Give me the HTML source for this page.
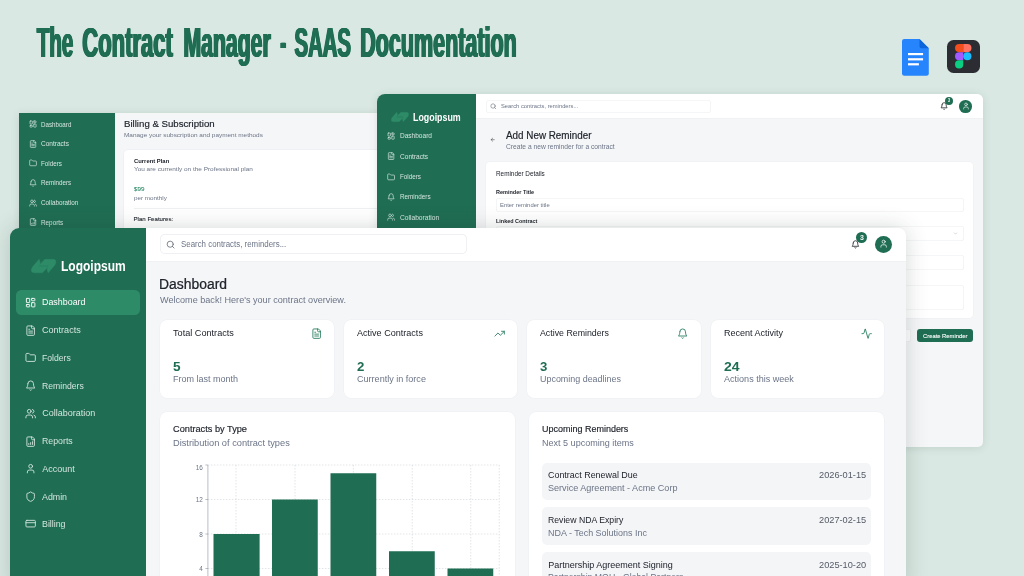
<!DOCTYPE html><html><head><meta charset="utf-8"><title>The Contract Manager - SAAS Documentation</title><style>html,body{margin:0;padding:0}body{width:1024px;height:576px;overflow:hidden;position:relative;background:#d9e8e2;font-family:"Liberation Sans", sans-serif}#root{position:absolute;left:0;top:0;width:1024px;height:576px;overflow:hidden;will-change:transform}svg{display:block;overflow:visible}.t{position:absolute;white-space:nowrap;transform-origin:0 0}h1{position:absolute;left:0;top:17px;margin:0;white-space:nowrap;font-size:43.2px;line-height:50px;font-weight:700;color:#1f6d53}.tt{display:inline-block;transform-origin:0 0;text-shadow:1.4px 0 0 #1f6d53,-1.4px 0 0 #1f6d53,.7px 0 0 #1f6d53,-.7px 0 0 #1f6d53}</style></head><body><div id="root"><h1><span class="tt" style="transform:translateX(36.82px) scaleX(0.4745)">The</span> <span class="tt" style="transform:translateX(-6.67px) scaleX(0.5094)">Contract</span> <span class="tt" style="transform:translateX(-94.51px) scaleX(0.4912)">Manager</span> <span class="tt" style="transform:translateX(-187.63px) scaleX(0.4000)">-</span> <span class="tt" style="transform:translateX(-199.49px) scaleX(0.4709)">SAAS</span> <span class="tt" style="transform:translateX(-265.82px) scaleX(0.4983)">Documentation</span></h1>
<svg style="position:absolute;left:901.700px;top:38.700px" width="26.800" height="36.700" viewBox="0 0 26.800 36.700"><path d="M2.500 0 H17.500 L26.800 9.300 V34.200 Q26.800 36.700 24.300 36.700 H2.500 Q0 36.700 0 34.200 V2.500 Q0 0 2.500 0 Z" fill="#2684fc"/><path d="M17.500 0 L26.800 9.300 H19.500 Q17.500 9.300 17.500 7.300 Z" fill="#0a66da"/><rect x="6" y="14" width="15.100" height="2.200" fill="#fff"/><rect x="6" y="19.200" width="15.100" height="2.200" fill="#fff"/><rect x="6" y="24.200" width="10.900" height="2.200" fill="#fff"/></svg><div style="position:absolute;left:946.8px;top:40px;width:32.90px;height:32.90px;background:#2c2d33;border-radius:6.5px;"></div><svg style="position:absolute;left:954.900px;top:44.400px" width="16.500" height="24.500" viewBox="0 0 16.500 24.500"><path d="M4.100 0 H8.250 V8.150 H4.100 A4.075 4.075 0 0 1 4.100 0 Z" fill="#f24e1e"/><path d="M8.250 0 H12.400 A4.075 4.075 0 0 1 12.400 8.150 H8.250 Z" fill="#ff7262"/><path d="M4.100 8.150 H8.250 V16.300 H4.100 A4.075 4.075 0 0 1 4.100 8.150 Z" fill="#a259ff"/><circle cx="12.350" cy="12.225" r="4.075" fill="#1abcfe"/><path d="M4.100 16.300 H8.250 V20.400 A4.100 4.100 0 1 1 4.100 16.300 Z" fill="#0acf83"/></svg><div style="position:absolute;left:18.6px;top:112.6px;width:361.40px;height:119.40px;border-radius:0;overflow:hidden;background:#f5f6f8;box-shadow:0 1px 8px rgba(40,70,60,.13)"><div style="position:absolute;left:-18.6px;top:-112.6px;width:1024px;height:576px"><div style="position:absolute;left:18.6px;top:112.6px;width:96.40px;height:127.40px;background:#1f6d53;border-radius:0px;"></div><svg style="position:absolute;left:28.95px;top:120.25px;" width="8.1" height="8.1" viewBox="0 0 24 24" fill="none" stroke="#d4e6de" stroke-width="2" stroke-linecap="round" stroke-linejoin="round"><rect x="3" y="3" width="7" height="9" rx="1"/><rect x="14" y="3" width="7" height="5" rx="1"/><rect x="14" y="12" width="7" height="9" rx="1"/><rect x="3" y="16" width="7" height="5" rx="1"/></svg><span class="t" style="top:120px;font-size:6.4px;line-height:9px;color:#d4e6de;left:41.25px;transform:scaleX(0.970);">Dashboard</span>
<svg style="position:absolute;left:28.95px;top:139.75px;" width="8.1" height="8.1" viewBox="0 0 24 24" fill="none" stroke="#d4e6de" stroke-width="2" stroke-linecap="round" stroke-linejoin="round"><path d="M15 2H6a2 2 0 0 0-2 2v16a2 2 0 0 0 2 2h12a2 2 0 0 0 2-2V7Z"/><path d="M14 2v4a2 2 0 0 0 2 2h4"/><path d="M10 9H8"/><path d="M16 13H8"/><path d="M16 17H8"/></svg><span class="t" style="top:139px;font-size:6.4px;line-height:9px;color:#d4e6de;left:41.25px;transform:scaleX(1.022);">Contracts</span>
<svg style="position:absolute;left:28.95px;top:159.25px;" width="8.1" height="8.1" viewBox="0 0 24 24" fill="none" stroke="#d4e6de" stroke-width="2" stroke-linecap="round" stroke-linejoin="round"><path d="M20 20a2 2 0 0 0 2-2V8a2 2 0 0 0-2-2h-7.9a2 2 0 0 1-1.69-.9L9.6 3.9A2 2 0 0 0 7.93 3H4a2 2 0 0 0-2 2v13a2 2 0 0 0 2 2Z"/></svg><span class="t" style="top:159px;font-size:6.4px;line-height:9px;color:#d4e6de;left:41.25px;transform:scaleX(0.983);">Folders</span>
<svg style="position:absolute;left:28.95px;top:178.75px;" width="8.1" height="8.1" viewBox="0 0 24 24" fill="none" stroke="#d4e6de" stroke-width="2" stroke-linecap="round" stroke-linejoin="round"><path d="M6 8a6 6 0 0 1 12 0c0 7 3 9 3 9H3s3-2 3-9"/><path d="M10.3 21a1.94 1.94 0 0 0 3.4 0"/></svg><span class="t" style="top:178px;font-size:6.4px;line-height:9px;color:#d4e6de;left:41.25px;transform:scaleX(0.977);">Reminders</span>
<svg style="position:absolute;left:28.95px;top:198.5px;" width="8.1" height="8.1" viewBox="0 0 24 24" fill="none" stroke="#d4e6de" stroke-width="2" stroke-linecap="round" stroke-linejoin="round"><path d="M16 21v-2a4 4 0 0 0-4-4H6a4 4 0 0 0-4 4v2"/><circle cx="9" cy="7" r="4"/><path d="M22 21v-2a4 4 0 0 0-3-3.87"/><path d="M16 3.13a4 4 0 0 1 0 7.75"/></svg><span class="t" style="top:198px;font-size:6.4px;line-height:9px;color:#d4e6de;left:41.25px;transform:scaleX(0.991);">Collaboration</span>
<svg style="position:absolute;left:28.95px;top:218.0px;" width="8.1" height="8.1" viewBox="0 0 24 24" fill="none" stroke="#d4e6de" stroke-width="2" stroke-linecap="round" stroke-linejoin="round"><path d="M15 2H6a2 2 0 0 0-2 2v16a2 2 0 0 0 2 2h12a2 2 0 0 0 2-2V7Z"/><path d="M14 2v4a2 2 0 0 0 2 2h4"/><path d="M8 18v-2"/><path d="M12 18v-4"/><path d="M16 18v-6"/></svg><span class="t" style="top:218px;font-size:6.4px;line-height:9px;color:#d4e6de;left:41.25px;transform:scaleX(0.992);">Reports</span>
<span class="t" style="top:118px;font-size:9.6px;line-height:12px;color:#20242c;-webkit-text-stroke:0.16px #20242c;left:124.20px;transform:scaleX(1.006);">Billing &amp; Subscription</span>
<span class="t" style="top:130px;font-size:6.1px;line-height:9px;color:#6b7486;left:124.20px;transform:scaleX(1.054);">Manage your subscription and payment methods</span>
<div style="position:absolute;left:124.2px;top:149.6px;width:275.80px;height:90.40px;background:#fff;border-radius:4px;box-shadow:0 0 0 .5px #e8eaed"></div><span class="t" style="top:156px;font-size:6.1px;line-height:9px;color:#20242c;font-weight:700;left:133.50px;transform:scaleX(0.963);">Current Plan</span>
<span class="t" style="top:164px;font-size:6.1px;line-height:9px;color:#6b7486;left:133.50px;transform:scaleX(1.053);">You are currently on the Professional plan</span>
<span class="t" style="top:184px;font-size:6.1px;line-height:9px;color:#2e8b68;-webkit-text-stroke:0.10px #2e8b68;left:133.50px;transform:scaleX(1.021);">$99</span>
<span class="t" style="top:193px;font-size:6.1px;line-height:9px;color:#6b7486;left:133.50px;transform:scaleX(1.031);">per monthly</span>
<div style="position:absolute;left:133.5px;top:208.4px;width:266.50px;height:0.50px;background:#eef0f2;border-radius:0px;"></div><span class="t" style="top:214px;font-size:6.1px;line-height:9px;color:#20242c;-webkit-text-stroke:0.10px #20242c;left:133.50px;">Plan Features:</span>
</div></div><div style="position:absolute;left:376.6px;top:93.5px;width:606.20px;height:353.80px;border-radius:8px 6px 5px 5px;overflow:hidden;background:#f5f6f8;box-shadow:0 1px 8px rgba(40,70,60,.13)"><div style="position:absolute;left:-376.6px;top:-93.5px;width:1024px;height:576px"><div style="position:absolute;left:470px;top:93.5px;width:513.00px;height:24.70px;background:#fff;border-radius:0px;"></div><div style="position:absolute;left:470px;top:118.2px;width:513.00px;height:0.50px;background:#f0f1f3;border-radius:0px;"></div><div style="position:absolute;left:376.6px;top:93.5px;width:99.50px;height:354.50px;background:#1f6d53;border-radius:0px;"></div><svg style="position:absolute;left:391.25px;top:112px" width="18.00" height="10.00" viewBox="0 0 25.300 14.800" preserveAspectRatio="none" fill="#2e8b68" stroke="#2e8b68" stroke-width=".5" stroke-linejoin="round"><path d="M8.140 0.300 L9.250 4.140 L8 7.700 H17.500 L11.440 14.500 H3.300 Q0.300 14.500 0.400 11.600 Q0.500 10.200 1.500 8.300 Z"/><path d="M8.140 0.300 L9.250 4.140 L8 7.700 H17.500 L11.440 14.500 H3.300 Q0.300 14.500 0.400 11.600 Q0.500 10.200 1.500 8.300 Z" transform="rotate(180 12.650 7.400)"/></svg><span class="t" style="top:111px;font-size:10.1px;line-height:13px;color:#fff;font-weight:700;left:413.00px;transform:scaleX(0.878);">Logoipsum</span>
<svg style="position:absolute;left:386.9px;top:132.0px;" width="8.2" height="8.2" viewBox="0 0 24 24" fill="none" stroke="#d4e6de" stroke-width="2" stroke-linecap="round" stroke-linejoin="round"><rect x="3" y="3" width="7" height="9" rx="1"/><rect x="14" y="3" width="7" height="5" rx="1"/><rect x="14" y="12" width="7" height="9" rx="1"/><rect x="3" y="16" width="7" height="5" rx="1"/></svg><span class="t" style="top:131px;font-size:6.6px;line-height:9px;color:#d4e6de;left:399.50px;transform:scaleX(0.990);">Dashboard</span>
<svg style="position:absolute;left:386.9px;top:152.25px;" width="8.2" height="8.2" viewBox="0 0 24 24" fill="none" stroke="#d4e6de" stroke-width="2" stroke-linecap="round" stroke-linejoin="round"><path d="M15 2H6a2 2 0 0 0-2 2v16a2 2 0 0 0 2 2h12a2 2 0 0 0 2-2V7Z"/><path d="M14 2v4a2 2 0 0 0 2 2h4"/><path d="M10 9H8"/><path d="M16 13H8"/><path d="M16 17H8"/></svg><span class="t" style="top:152px;font-size:6.6px;line-height:9px;color:#d4e6de;left:399.50px;transform:scaleX(0.994);">Contracts</span>
<svg style="position:absolute;left:386.9px;top:172.5px;" width="8.2" height="8.2" viewBox="0 0 24 24" fill="none" stroke="#d4e6de" stroke-width="2" stroke-linecap="round" stroke-linejoin="round"><path d="M20 20a2 2 0 0 0 2-2V8a2 2 0 0 0-2-2h-7.9a2 2 0 0 1-1.69-.9L9.6 3.9A2 2 0 0 0 7.93 3H4a2 2 0 0 0-2 2v13a2 2 0 0 0 2 2Z"/></svg><span class="t" style="top:172px;font-size:6.6px;line-height:9px;color:#d4e6de;left:399.50px;transform:scaleX(0.948);">Folders</span>
<svg style="position:absolute;left:386.9px;top:192.75px;" width="8.2" height="8.2" viewBox="0 0 24 24" fill="none" stroke="#d4e6de" stroke-width="2" stroke-linecap="round" stroke-linejoin="round"><path d="M6 8a6 6 0 0 1 12 0c0 7 3 9 3 9H3s3-2 3-9"/><path d="M10.3 21a1.94 1.94 0 0 0 3.4 0"/></svg><span class="t" style="top:192px;font-size:6.6px;line-height:9px;color:#d4e6de;left:399.50px;transform:scaleX(0.959);">Reminders</span>
<svg style="position:absolute;left:386.9px;top:213.25px;" width="8.2" height="8.2" viewBox="0 0 24 24" fill="none" stroke="#d4e6de" stroke-width="2" stroke-linecap="round" stroke-linejoin="round"><path d="M16 21v-2a4 4 0 0 0-4-4H6a4 4 0 0 0-4 4v2"/><circle cx="9" cy="7" r="4"/><path d="M22 21v-2a4 4 0 0 0-3-3.87"/><path d="M16 3.13a4 4 0 0 1 0 7.75"/></svg><span class="t" style="top:213px;font-size:6.6px;line-height:9px;color:#d4e6de;left:399.50px;transform:scaleX(1.008);">Collaboration</span>
<div style="position:absolute;left:485.5px;top:99.5px;width:225.00px;height:13.50px;background:#fff;border-radius:3.5px;box-shadow:inset 0 0 0 .6px #eceef1"></div><svg style="position:absolute;left:489.8px;top:103.05px;" width="6.6" height="6.6" viewBox="0 0 24 24" fill="none" stroke="#5d6370" stroke-width="2" stroke-linecap="round" stroke-linejoin="round"><circle cx="11" cy="11" r="8"/><path d="m21 21-4.300-4.300"/></svg><span class="t" style="top:101px;font-size:6.1px;line-height:9px;color:#6b7486;left:501.00px;transform:scaleX(0.950);">Search contracts, reminders...</span>
<svg style="position:absolute;left:939.6px;top:101.8px;" width="8.2" height="8.2" viewBox="0 0 24 24" fill="none" stroke="#24272e" stroke-width="2.3" stroke-linecap="round" stroke-linejoin="round"><path d="M6 8a6 6 0 0 1 12 0c0 7 3 9 3 9H3s3-2 3-9"/><path d="M10.3 21a1.94 1.94 0 0 0 3.4 0"/></svg><div style="position:absolute;left:945px;top:96.500px;width:8px;height:8px;border-radius:50%;background:#1f6d53"></div><span class="t" style="top:97px;font-size:4.6px;line-height:7px;color:#fff;font-weight:700;left:947.90px;transform:scaleX(0.800);">3</span>
<div style="position:absolute;left:959.200px;top:100px;width:12.600px;height:12.600px;border-radius:50%;background:#1f6d53"></div><svg style="position:absolute;left:961.7px;top:102.3px;" width="8" height="8" viewBox="0 0 24 24" fill="none" stroke="#fff" stroke-width="1.9" stroke-linecap="round" stroke-linejoin="round"><path d="M19 21v-2a4 4 0 0 0-4-4H9a4 4 0 0 0-4 4v2"/><circle cx="12" cy="7" r="4"/></svg><svg style="position:absolute;left:489.8px;top:137.3px;" width="5.4" height="5.4" viewBox="0 0 24 24" fill="none" stroke="#30343c" stroke-width="2.2" stroke-linecap="round" stroke-linejoin="round"><path d="m12 19-7-7 7-7"/><path d="M19 12H5"/></svg><span class="t" style="top:129px;font-size:10.4px;line-height:13px;color:#20242c;-webkit-text-stroke:0.18px #20242c;left:506.00px;transform:scaleX(0.949);">Add New Reminder</span>
<span class="t" style="top:142px;font-size:6.3px;line-height:9px;color:#6b7486;left:506.00px;transform:scaleX(1.060);">Create a new reminder for a contract</span>
<div style="position:absolute;left:486px;top:161.5px;width:487.00px;height:156.50px;background:#fff;border-radius:4px;box-shadow:0 0 0 .5px #eceef1"></div><span class="t" style="top:169px;font-size:6.6px;line-height:9px;color:#20242c;left:495.50px;transform:scaleX(0.965);">Reminder Details</span>
<span class="t" style="top:188px;font-size:5.7px;line-height:8px;color:#20242c;font-weight:700;left:495.50px;transform:scaleX(0.968);">Reminder Title</span>
<div style="position:absolute;left:495.5px;top:198px;width:468.00px;height:13.50px;background:#fff;border-radius:3px;box-shadow:inset 0 0 0 .6px #eceef1"></div><span class="t" style="top:201px;font-size:5.7px;line-height:8px;color:#6b7486;left:500.00px;transform:scaleX(1.034);">Enter reminder title</span>
<span class="t" style="top:217px;font-size:5.7px;line-height:8px;color:#20242c;font-weight:700;left:495.50px;transform:scaleX(0.956);">Linked Contract</span>
<div style="position:absolute;left:495.5px;top:226px;width:468.00px;height:14.50px;background:#fff;border-radius:3px;box-shadow:inset 0 0 0 .6px #eceef1"></div><svg style="position:absolute;left:952.5px;top:230.8px;" width="5" height="5" viewBox="0 0 24 24" fill="none" stroke="#9aa0aa" stroke-width="2" stroke-linecap="round" stroke-linejoin="round"><path d="m6 9 6 6 6-6"/></svg><div style="position:absolute;left:495.5px;top:255px;width:468.00px;height:14.50px;background:#fff;border-radius:3px;box-shadow:inset 0 0 0 .6px #eceef1"></div><div style="position:absolute;left:495.5px;top:284.5px;width:468.00px;height:25.00px;background:#fff;border-radius:3px;box-shadow:inset 0 0 0 .6px #eceef1"></div><div style="position:absolute;left:880px;top:328.6px;width:31.30px;height:13.90px;background:#fff;border-radius:3px;box-shadow:inset 0 0 0 .6px #e6e8ec"></div><span class="t" style="top:332px;font-size:5.6px;line-height:8px;color:#20242c;font-weight:700;left:887.00px;transform:scaleX(0.905);">Cancel</span>
<div style="position:absolute;left:917.2px;top:328.6px;width:56.30px;height:13.90px;background:#1f6d53;border-radius:3px;"></div><span class="t" style="top:332px;font-size:5.7px;line-height:8px;color:#fff;-webkit-text-stroke:0.10px #fff;left:922.90px;transform:scaleX(1.025);">Create Reminder</span>
</div></div><div style="position:absolute;left:10.4px;top:227.5px;width:895.60px;height:362.50px;border-radius:9px 8px 0 0;overflow:hidden;background:#f5f6f8;box-shadow:0 0 22px rgba(40,60,50,.2)"><div style="position:absolute;left:-10.4px;top:-227.5px;width:1024px;height:576px"><div style="position:absolute;left:140px;top:227.5px;width:766.00px;height:33.30px;background:#fff;border-radius:0px;"></div><div style="position:absolute;left:140px;top:260.8px;width:766.00px;height:0.50px;background:#f0f1f3;border-radius:0px;"></div><div style="position:absolute;left:10.4px;top:227.5px;width:136.10px;height:352.50px;background:#1f6d53;border-radius:0px;"></div><svg style="position:absolute;left:30.75px;top:259.1px" width="25.25" height="14.10" viewBox="0 0 25.300 14.800" preserveAspectRatio="none" fill="#2e8b68" stroke="#2e8b68" stroke-width=".5" stroke-linejoin="round"><path d="M8.140 0.300 L9.250 4.140 L8 7.700 H17.500 L11.440 14.500 H3.300 Q0.300 14.500 0.400 11.600 Q0.500 10.200 1.500 8.300 Z"/><path d="M8.140 0.300 L9.250 4.140 L8 7.700 H17.500 L11.440 14.500 H3.300 Q0.300 14.500 0.400 11.600 Q0.500 10.200 1.500 8.300 Z" transform="rotate(180 12.650 7.400)"/></svg><span class="t" style="top:259px;font-size:13.8px;line-height:16px;color:#fff;font-weight:700;left:60.80px;transform:scaleX(0.871);">Logoipsum</span>
<div style="position:absolute;left:16.4px;top:289.5px;width:123.70px;height:25.50px;background:#2e8b68;border-radius:5.5px;"></div><svg style="position:absolute;left:24.85px;top:296.75px;" width="11.3" height="11.3" viewBox="0 0 24 24" fill="none" stroke="#fff" stroke-width="1.9" stroke-linecap="round" stroke-linejoin="round"><rect x="3" y="3" width="7" height="9" rx="1"/><rect x="14" y="3" width="7" height="5" rx="1"/><rect x="14" y="12" width="7" height="9" rx="1"/><rect x="3" y="16" width="7" height="5" rx="1"/></svg><span class="t" style="top:297px;font-size:9px;line-height:11px;color:#fff;left:42.30px;transform:scaleX(0.988);">Dashboard</span>
<svg style="position:absolute;left:24.85px;top:324.75px;" width="11.3" height="11.3" viewBox="0 0 24 24" fill="none" stroke="#d4e6de" stroke-width="1.9" stroke-linecap="round" stroke-linejoin="round"><path d="M15 2H6a2 2 0 0 0-2 2v16a2 2 0 0 0 2 2h12a2 2 0 0 0 2-2V7Z"/><path d="M14 2v4a2 2 0 0 0 2 2h4"/><path d="M10 9H8"/><path d="M16 13H8"/><path d="M16 17H8"/></svg><span class="t" style="top:325px;font-size:9px;line-height:11px;color:#d4e6de;left:42.30px;transform:scaleX(1.005);">Contracts</span>
<svg style="position:absolute;left:24.85px;top:352.25px;" width="11.3" height="11.3" viewBox="0 0 24 24" fill="none" stroke="#d4e6de" stroke-width="1.9" stroke-linecap="round" stroke-linejoin="round"><path d="M20 20a2 2 0 0 0 2-2V8a2 2 0 0 0-2-2h-7.9a2 2 0 0 1-1.69-.9L9.6 3.9A2 2 0 0 0 7.93 3H4a2 2 0 0 0-2 2v13a2 2 0 0 0 2 2Z"/></svg><span class="t" style="top:353px;font-size:9px;line-height:11px;color:#d4e6de;left:42.30px;transform:scaleX(0.957);">Folders</span>
<svg style="position:absolute;left:24.85px;top:379.95px;" width="11.3" height="11.3" viewBox="0 0 24 24" fill="none" stroke="#d4e6de" stroke-width="1.9" stroke-linecap="round" stroke-linejoin="round"><path d="M6 8a6 6 0 0 1 12 0c0 7 3 9 3 9H3s3-2 3-9"/><path d="M10.3 21a1.94 1.94 0 0 0 3.4 0"/></svg><span class="t" style="top:381px;font-size:9px;line-height:11px;color:#d4e6de;left:42.30px;transform:scaleX(0.961);">Reminders</span>
<svg style="position:absolute;left:24.85px;top:407.65px;" width="11.3" height="11.3" viewBox="0 0 24 24" fill="none" stroke="#d4e6de" stroke-width="1.9" stroke-linecap="round" stroke-linejoin="round"><path d="M16 21v-2a4 4 0 0 0-4-4H6a4 4 0 0 0-4 4v2"/><circle cx="9" cy="7" r="4"/><path d="M22 21v-2a4 4 0 0 0-3-3.87"/><path d="M16 3.13a4 4 0 0 1 0 7.75"/></svg><span class="t" style="top:408px;font-size:9px;line-height:11px;color:#d4e6de;left:42.30px;">Collaboration</span>
<svg style="position:absolute;left:24.85px;top:435.55px;" width="11.3" height="11.3" viewBox="0 0 24 24" fill="none" stroke="#d4e6de" stroke-width="1.9" stroke-linecap="round" stroke-linejoin="round"><path d="M15 2H6a2 2 0 0 0-2 2v16a2 2 0 0 0 2 2h12a2 2 0 0 0 2-2V7Z"/><path d="M14 2v4a2 2 0 0 0 2 2h4"/><path d="M8 18v-2"/><path d="M12 18v-4"/><path d="M16 18v-6"/></svg><span class="t" style="top:436px;font-size:9px;line-height:11px;color:#d4e6de;left:42.30px;transform:scaleX(0.975);">Reports</span>
<svg style="position:absolute;left:24.85px;top:463.25px;" width="11.3" height="11.3" viewBox="0 0 24 24" fill="none" stroke="#d4e6de" stroke-width="1.9" stroke-linecap="round" stroke-linejoin="round"><path d="M19 21v-2a4 4 0 0 0-4-4H9a4 4 0 0 0-4 4v2"/><circle cx="12" cy="7" r="4"/></svg><span class="t" style="top:464px;font-size:9px;line-height:11px;color:#d4e6de;left:42.30px;">Account</span>
<svg style="position:absolute;left:24.85px;top:490.95px;" width="11.3" height="11.3" viewBox="0 0 24 24" fill="none" stroke="#d4e6de" stroke-width="1.9" stroke-linecap="round" stroke-linejoin="round"><path d="M20 13c0 5-3.5 7.500-7.660 8.950a1 1 0 0 1-.67-.01C7.500 20.500 4 18 4 13V6a1 1 0 0 1 1-1c2 0 4.500-1.200 6.240-2.720a1.170 1.170 0 0 1 1.520 0C14.510 3.810 17 5 19 5a1 1 0 0 1 1 1z"/></svg><span class="t" style="top:492px;font-size:9px;line-height:11px;color:#d4e6de;left:42.30px;transform:scaleX(0.980);">Admin</span>
<svg style="position:absolute;left:24.85px;top:518.45px;" width="11.3" height="11.3" viewBox="0 0 24 24" fill="none" stroke="#d4e6de" stroke-width="1.9" stroke-linecap="round" stroke-linejoin="round"><rect width="20" height="14" x="2" y="5" rx="2"/><line x1="2" x2="22" y1="10" y2="10"/></svg><span class="t" style="top:519px;font-size:9px;line-height:11px;color:#d4e6de;left:42.30px;transform:scaleX(0.979);">Billing</span>
<div style="position:absolute;left:159.75px;top:234.3px;width:306.75px;height:19.30px;background:#fff;border-radius:5px;box-shadow:inset 0 0 0 .7px #eaecef"></div><svg style="position:absolute;left:165.8px;top:239.8px;" width="9.2" height="9.2" viewBox="0 0 24 24" fill="none" stroke="#5d6370" stroke-width="2" stroke-linecap="round" stroke-linejoin="round"><circle cx="11" cy="11" r="8"/><path d="m21 21-4.300-4.300"/></svg><span class="t" style="top:239px;font-size:8.3px;line-height:11px;color:#6b7486;left:181.00px;transform:scaleX(0.951);">Search contracts, reminders...</span>
<svg style="position:absolute;left:851.05px;top:239.55px;" width="8.9" height="8.9" viewBox="0 0 24 24" fill="none" stroke="#24272e" stroke-width="2.2" stroke-linecap="round" stroke-linejoin="round"><path d="M6 8a6 6 0 0 1 12 0c0 7 3 9 3 9H3s3-2 3-9"/><path d="M10.3 21a1.94 1.94 0 0 0 3.4 0"/></svg><div style="position:absolute;left:856.250px;top:232px;width:11px;height:11px;border-radius:50%;background:#1f6d53"></div><span class="t" style="top:233px;font-size:7px;line-height:9px;color:#eef6f2;font-weight:700;left:860.00px;">3</span>
<div style="position:absolute;left:874.750px;top:235.500px;width:17px;height:17px;border-radius:50%;background:#1f6d53"></div><svg style="position:absolute;left:878.65px;top:239.45px;" width="9.3" height="9.3" viewBox="0 0 24 24" fill="none" stroke="#fff" stroke-width="1.9" stroke-linecap="round" stroke-linejoin="round"><path d="M19 21v-2a4 4 0 0 0-4-4H9a4 4 0 0 0-4 4v2"/><circle cx="12" cy="7" r="4"/></svg><span class="t" style="top:276px;font-size:14px;line-height:16px;color:#20242c;-webkit-text-stroke:0.24px #20242c;left:158.76px;transform:scaleX(0.993);">Dashboard</span>
<span class="t" style="top:295px;font-size:9px;line-height:11px;color:#6b7486;left:159.75px;transform:scaleX(1.010);">Welcome back! Here's your contract overview.</span>
<div style="position:absolute;left:159.75px;top:319.6px;width:174.25px;height:78.40px;background:#fff;border-radius:7px;box-shadow:0 0 0 .5px #eceef1"></div><span class="t" style="top:328px;font-size:8.8px;line-height:11px;color:#20242c;left:172.75px;transform:scaleX(1.038);">Total Contracts</span>
<span class="t" style="top:360px;font-size:12.3px;line-height:15px;color:#1f6d53;font-weight:700;left:172.75px;transform:scaleX(1.107);">5</span>
<span class="t" style="top:374px;font-size:8.8px;line-height:11px;color:#6b7486;left:172.75px;transform:scaleX(1.025);">From last month</span>
<svg style="position:absolute;left:310.55px;top:327.65px;" width="11.3" height="11.3" viewBox="0 0 24 24" fill="none" stroke="#2a7f60" stroke-width="1.9" stroke-linecap="round" stroke-linejoin="round"><path d="M15 2H6a2 2 0 0 0-2 2v16a2 2 0 0 0 2 2h12a2 2 0 0 0 2-2V7Z"/><path d="M14 2v4a2 2 0 0 0 2 2h4"/><path d="M10 9H8"/><path d="M16 13H8"/><path d="M16 17H8"/></svg><div style="position:absolute;left:343.5px;top:319.6px;width:173.75px;height:78.40px;background:#fff;border-radius:7px;box-shadow:0 0 0 .5px #eceef1"></div><span class="t" style="top:328px;font-size:8.8px;line-height:11px;color:#20242c;left:356.50px;transform:scaleX(1.029);">Active Contracts</span>
<span class="t" style="top:360px;font-size:12.3px;line-height:15px;color:#1f6d53;font-weight:700;left:356.50px;transform:scaleX(1.071);">2</span>
<span class="t" style="top:374px;font-size:8.8px;line-height:11px;color:#6b7486;left:356.50px;transform:scaleX(1.029);">Currently in force</span>
<svg style="position:absolute;left:493.8px;top:327.65px;" width="11.3" height="11.3" viewBox="0 0 24 24" fill="none" stroke="#2a7f60" stroke-width="1.9" stroke-linecap="round" stroke-linejoin="round"><polyline points="22 7 13.500 15.500 8.500 10.500 2 17"/><polyline points="16 7 22 7 22 13"/></svg><div style="position:absolute;left:527px;top:319.6px;width:173.60px;height:78.40px;background:#fff;border-radius:7px;box-shadow:0 0 0 .5px #eceef1"></div><span class="t" style="top:328px;font-size:8.8px;line-height:11px;color:#20242c;left:540.00px;">Active Reminders</span>
<span class="t" style="top:360px;font-size:12.3px;line-height:15px;color:#1f6d53;font-weight:700;left:540.00px;transform:scaleX(1.071);">3</span>
<span class="t" style="top:374px;font-size:8.8px;line-height:11px;color:#6b7486;left:540.00px;transform:scaleX(1.015);">Upcoming deadlines</span>
<svg style="position:absolute;left:677.15px;top:327.65px;" width="11.3" height="11.3" viewBox="0 0 24 24" fill="none" stroke="#2a7f60" stroke-width="1.9" stroke-linecap="round" stroke-linejoin="round"><path d="M6 8a6 6 0 0 1 12 0c0 7 3 9 3 9H3s3-2 3-9"/><path d="M10.3 21a1.94 1.94 0 0 0 3.4 0"/></svg><div style="position:absolute;left:710.5px;top:319.6px;width:173.80px;height:78.40px;background:#fff;border-radius:7px;box-shadow:0 0 0 .5px #eceef1"></div><span class="t" style="top:328px;font-size:8.8px;line-height:11px;color:#20242c;left:723.50px;transform:scaleX(1.025);">Recent Activity</span>
<span class="t" style="top:360px;font-size:12.3px;line-height:15px;color:#1f6d53;font-weight:700;left:723.50px;transform:scaleX(1.138);">24</span>
<span class="t" style="top:374px;font-size:8.8px;line-height:11px;color:#6b7486;left:723.50px;transform:scaleX(1.028);">Actions this week</span>
<svg style="position:absolute;left:860.85px;top:327.65px;" width="11.3" height="11.3" viewBox="0 0 24 24" fill="none" stroke="#2a7f60" stroke-width="1.9" stroke-linecap="round" stroke-linejoin="round"><path d="M22 12h-2.480a2 2 0 0 0-1.930 1.460l-2.350 8.360a.25.25 0 0 1-.48 0L9.240 2.180a.25.25 0 0 0-.48 0l-2.350 8.360A2 2 0 0 1 4.490 12H2"/></svg><div style="position:absolute;left:159.75px;top:412.4px;width:355.25px;height:177.60px;background:#fff;border-radius:7px;box-shadow:0 0 0 .5px #eceef1"></div><span class="t" style="top:424px;font-size:8.8px;line-height:11px;color:#20242c;-webkit-text-stroke:0.15px #20242c;left:173.00px;transform:scaleX(1.046);">Contracts by Type</span>
<span class="t" style="top:438px;font-size:8.8px;line-height:11px;color:#6b7486;left:173.00px;transform:scaleX(1.052);">Distribution of contract types</span>
<svg style="position:absolute;left:0;top:0" width="1024" height="576" viewBox="0 0 1024 576"><line x1="207.900" x2="499.250" y1="465" y2="465" stroke="#cfd3d9" stroke-width=".6" stroke-dasharray="1.500 1.500"/><line x1="205.400" x2="207.900" y1="465" y2="465" stroke="#8b909a" stroke-width=".6"/><line x1="207.900" x2="499.250" y1="499.5" y2="499.5" stroke="#cfd3d9" stroke-width=".6" stroke-dasharray="1.500 1.500"/><line x1="205.400" x2="207.900" y1="499.5" y2="499.5" stroke="#8b909a" stroke-width=".6"/><line x1="207.900" x2="499.250" y1="534" y2="534" stroke="#cfd3d9" stroke-width=".6" stroke-dasharray="1.500 1.500"/><line x1="205.400" x2="207.900" y1="534" y2="534" stroke="#8b909a" stroke-width=".6"/><line x1="207.900" x2="499.250" y1="568.5" y2="568.5" stroke="#cfd3d9" stroke-width=".6" stroke-dasharray="1.500 1.500"/><line x1="205.400" x2="207.900" y1="568.5" y2="568.5" stroke="#8b909a" stroke-width=".6"/><line x1="236" x2="236" y1="465" y2="580" stroke="#cfd3d9" stroke-width=".6" stroke-dasharray="1.500 1.500"/><line x1="295" x2="295" y1="465" y2="580" stroke="#cfd3d9" stroke-width=".6" stroke-dasharray="1.500 1.500"/><line x1="353.4" x2="353.4" y1="465" y2="580" stroke="#cfd3d9" stroke-width=".6" stroke-dasharray="1.500 1.500"/><line x1="412.25" x2="412.25" y1="465" y2="580" stroke="#cfd3d9" stroke-width=".6" stroke-dasharray="1.500 1.500"/><line x1="470.75" x2="470.75" y1="465" y2="580" stroke="#cfd3d9" stroke-width=".6" stroke-dasharray="1.500 1.500"/><line x1="499.25" x2="499.25" y1="465" y2="580" stroke="#cfd3d9" stroke-width=".6" stroke-dasharray="1.500 1.500"/><line x1="207.900" x2="207.900" y1="465" y2="580" stroke="#8b909a" stroke-width=".6"/><rect x="213.5" y="534" width="46.10" height="46" fill="#1f6d53"/><rect x="272" y="499.5" width="45.75" height="80.5" fill="#1f6d53"/><rect x="330.5" y="473.25" width="45.75" height="106.75" fill="#1f6d53"/><rect x="389" y="551.25" width="45.75" height="28.75" fill="#1f6d53"/><rect x="447.5" y="568.5" width="45.75" height="11.5" fill="#1f6d53"/></svg><span class="t" style="top:463px;font-size:6.4px;line-height:9px;color:#6b7486;left:195.65px;">16</span>
<span class="t" style="top:495px;font-size:6.4px;line-height:9px;color:#6b7486;left:195.65px;">12</span>
<span class="t" style="top:530px;font-size:6.4px;line-height:9px;color:#6b7486;left:199.20px;">8</span>
<span class="t" style="top:564px;font-size:6.4px;line-height:9px;color:#6b7486;left:199.20px;">4</span>
<div style="position:absolute;left:529.25px;top:412.2px;width:354.75px;height:177.80px;background:#fff;border-radius:7px;box-shadow:0 0 0 .5px #eceef1"></div><span class="t" style="top:424px;font-size:8.8px;line-height:11px;color:#20242c;-webkit-text-stroke:0.15px #20242c;left:541.75px;transform:scaleX(1.021);">Upcoming Reminders</span>
<span class="t" style="top:438px;font-size:8.8px;line-height:11px;color:#6b7486;left:541.75px;transform:scaleX(1.027);">Next 5 upcoming items</span>
<div style="position:absolute;left:541.75px;top:462.6px;width:329.65px;height:37.60px;background:#f4f5f7;border-radius:5px;"></div><span class="t" style="top:470px;font-size:9px;line-height:11px;color:#20242c;left:548.25px;transform:scaleX(0.991);">Contract Renewal Due</span>
<span class="t" style="top:483px;font-size:9px;line-height:11px;color:#6b7486;left:548.25px;transform:scaleX(1.007);">Service Agreement - Acme Corp</span>
<span class="t" style="top:470px;font-size:9px;line-height:11px;color:#555b66;left:818.80px;transform:scaleX(1.025);">2026-01-15</span>
<div style="position:absolute;left:541.75px;top:507px;width:329.65px;height:37.60px;background:#f4f5f7;border-radius:5px;"></div><span class="t" style="top:515px;font-size:9px;line-height:11px;color:#20242c;left:548.25px;transform:scaleX(0.965);">Review NDA Expiry</span>
<span class="t" style="top:528px;font-size:9px;line-height:11px;color:#6b7486;left:548.25px;transform:scaleX(0.995);">NDA - Tech Solutions Inc</span>
<span class="t" style="top:515px;font-size:9px;line-height:11px;color:#555b66;left:818.80px;transform:scaleX(1.025);">2027-02-15</span>
<div style="position:absolute;left:541.75px;top:551.8px;width:329.65px;height:37.60px;background:#f4f5f7;border-radius:5px;"></div><span class="t" style="top:560px;font-size:9px;line-height:11px;color:#20242c;left:548.25px;">Partnership Agreement Signing</span>
<span class="t" style="top:572px;font-size:9px;line-height:11px;color:#6b7486;left:548.25px;transform:scaleX(0.966);">Partnership MOU - Global Partners</span>
<span class="t" style="top:560px;font-size:9px;line-height:11px;color:#555b66;left:818.80px;transform:scaleX(1.025);">2025-10-20</span>
</div></div></div></body></html>
